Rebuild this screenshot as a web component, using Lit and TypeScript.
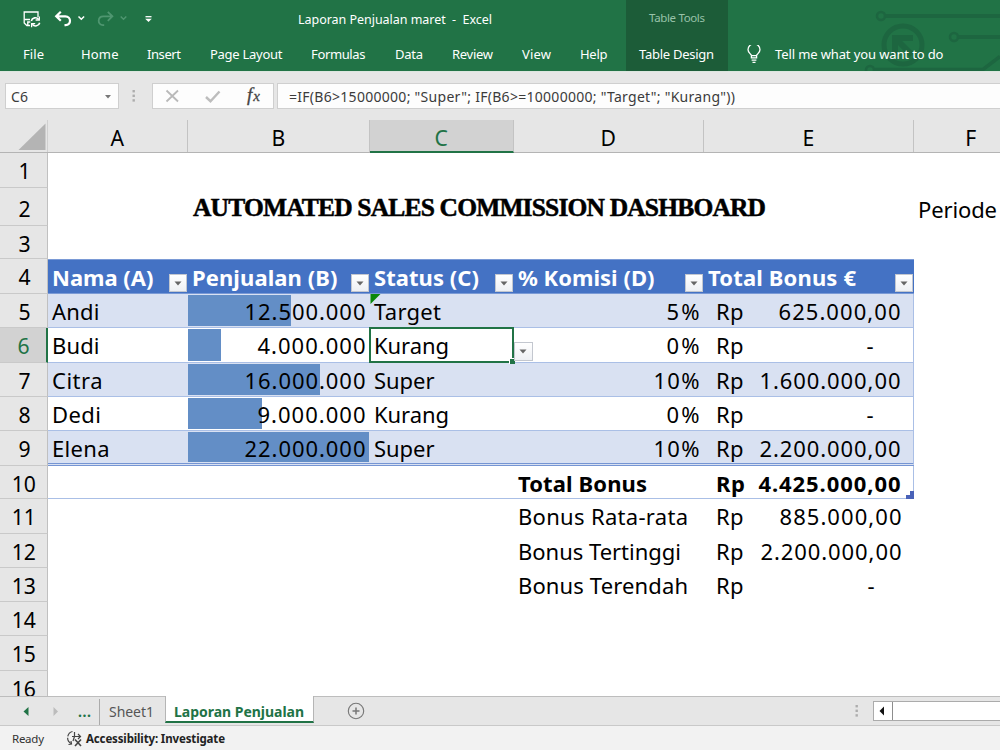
import { LitElement, html, css, nothing } from "lit";
import { customElement, property } from "lit/decorators.js";
import { classMap } from "lit/directives/class-map.js";
import { styleMap } from "lit/directives/style-map.js";

/** A run of text tracked so that it fills a given advance width. */
@customElement("fit-text")
class FitText extends LitElement {
  @property() text = "";
  @property({ type: Number }) w = 0;

  static styles = css`
    :host { display: inline-block; white-space: pre; }
    .run { display: inline-block; }
  `;

  updated() {
    const run = this.renderRoot.querySelector(".run") as HTMLElement;
    run.style.letterSpacing = "0px";
    const natural = run.getBoundingClientRect().width;
    const n = this.text.length;
    if (!this.w || n < 2) return;
    const ls = (this.w - natural) / (n - 1);
    run.style.letterSpacing = `${ls}px`;
    run.style.marginRight = `${-ls}px`;
  }

  render() {
    return html`<span class="run">${this.text}</span>`;
  }
}

const fit = (text: string, w: number) => html`<fit-text .text=${text} .w=${w}></fit-text>`;

interface Row {
  n: number;
  h: number;
  name?: [string, number];
  sales?: [string, number];
  bar?: number;
  status?: [string, number];
  label?: [string, number];
  pct?: [string, number];
  bonus?: [string, number];
}

const ROWS: Row[] = [
  { n: 1, h: 35 },
  { n: 2, h: 38 },
  { n: 3, h: 33 },
  { n: 4, h: 35 },
  { n: 5, h: 34, name: ["Andi", 47.5], sales: ["12.500.000", 121], bar: 103, status: ["Target", 67], pct: ["5%", 33], bonus: ["625.000,00", 122] },
  { n: 6, h: 35, name: ["Budi", 47.5], sales: ["4.000.000", 108], bar: 33, status: ["Kurang", 75], pct: ["0%", 33], bonus: ["-", 0] },
  { n: 7, h: 34, name: ["Citra", 50.5], sales: ["16.000.000", 121], bar: 132, status: ["Super", 60.5], pct: ["10%", 46], bonus: ["1.600.000,00", 141] },
  { n: 8, h: 34, name: ["Dedi", 49], sales: ["9.000.000", 108], bar: 74, status: ["Kurang", 75], pct: ["0%", 33], bonus: ["-", 0] },
  { n: 9, h: 35, name: ["Elena", 57.5], sales: ["22.000.000", 121], bar: 181, status: ["Super", 60.5], pct: ["10%", 46], bonus: ["2.200.000,00", 141] },
  { n: 10, h: 33, label: ["Total Bonus", 129], bonus: ["4.425.000,00", 142] },
  { n: 11, h: 35, label: ["Bonus Rata-rata", 170], bonus: ["885.000,00", 122] },
  { n: 12, h: 34, label: ["Bonus Tertinggi", 163], bonus: ["2.200.000,00", 141] },
  { n: 13, h: 34, label: ["Bonus Terendah", 170], bonus: ["-", 0] },
  { n: 14, h: 34 },
  { n: 15, h: 35 },
  { n: 16, h: 34 },
];

const HEADS: [string, number][] = [
  ["Nama (A)", 101.5],
  ["Penjualan (B)", 145.5],
  ["Status (C)", 105],
  ["% Komisi (D)", 136.5],
  ["Total Bonus €", 148],
];

const TABS: [string, number][] = [
  ["File", 21], ["Home", 37.5], ["Insert", 34], ["Page Layout", 72.5], ["Formulas", 54.5],
  ["Data", 28], ["Review", 41], ["View", 29], ["Help", 27.5],
];

@customElement("app-root")
class AppRoot extends LitElement {
  static styles = css`
    :host {
      display: flex; flex-direction: column; width: 1000px; height: 750px; overflow: hidden;
      background: #fff; color: #000;
      font-family: "Noto Sans", "Open Sans", sans-serif; font-size: 13px;
    }
    * { box-sizing: border-box; }
    svg { display: block; }

    .ribbon { height: 71px; flex: none; position: relative; background: #217346; color: #fff; display: flex; overflow: hidden; }
    .art { position: absolute; right: 0; top: 0; }
    .left { width: 626px; display: flex; flex-direction: column; }
    .quick { height: 38px; display: flex; }
    .doc { padding-left: 138px; line-height: 40px; font-size: 12.5px; }
    .tabs { display: grid; grid-template-columns: 58px 66px 63px 101px 84px 57px 70px 58px 46px; padding-left: 23px; line-height: 33px; }
    .context { width: 102px; background: #1c5c38; display: flex; flex-direction: column; position: relative; }
    .tools { height: 38px; line-height: 35px; padding-left: 23px; font-size: 11.5px; color: #98c2a9; }
    .design { line-height: 33px; padding-left: 13px; }
    .tell { padding: 38px 0 0 19px; display: flex; gap: 14px; line-height: 33px; position: relative; }
    .bulb { padding-top: 7px; }

    .formula { height: 49px; flex: none; background: #e6e6e6; border-top: 1px solid #dce6df; padding: 11px 0 0 5px; display: flex; }
    .box { height: 26px; background: #fdfdfd; border: 1px solid #cfcfcf; font-size: 14px; line-height: 25px; color: #3b3b3b; }
    .name { width: 114px; display: flex; justify-content: space-between; padding: 0 5px; }
    .grip { width: 33px; padding: 6px 0 0 13px; }
    .fx { width: 122px; }
    .expr { flex: 1; margin-left: 3px; border-right: 0; padding-left: 11px; }

    .sheet { flex: 1; overflow: hidden; min-height: 0; }
    .row { display: grid; grid-template-columns: 48px 140px 182px 144px 190px 210px 86px; grid-template-rows: 100%; }
    .cols { height: 33px; background: #e6e6e6; border-bottom: 1px solid #b4b4b4; }
    .col { text-align: center; font-size: 22.5px; line-height: 35px; border-right: 1px solid #c3c3c3; height: 32px; }
    .col.last { padding-left: 28px; border: 0; }
    .col.corner { border-right-color: #d0d0d0; padding: 0; }
    .col.on { background: #d2d2d2; color: #217346; height: 33px; border-bottom: 2px solid #217346; }
    .thin { display: inline-block; transform: scaleX(0.94); }

    .num { background: #e6e6e6; border-right: 1px solid #c0c0c0; border-bottom: 1px solid #c9c9c9; text-align: center; font-size: 22.5px; line-height: 35px; padding-left: 1px; }
    .num.on { background: #d2d2d2; color: #217346; border-right: 2px solid #217346; }
    .num.tall { line-height: 41px; }
    .cell { position: relative; padding: 0 4px; font-size: 22px; line-height: 35px; white-space: nowrap; }
    .table { border-bottom: 1px solid #aabfe6; }
    .band { background: #d9e1f2; }
    .edge { border-right: 1px solid #aabfe6; }
    .nine { border-bottom: 3px double #7595d3; }
    .right { text-align: right; padding-right: 4.5px; }
    .bold { font-weight: 700; line-height: 34px; }
    .head { background: #4472c4; color: #fff; font-weight: 700; border-top: 1px solid #7a9ad6; border-bottom: 1px solid #7a9ad6; line-height: 34px; }
    .money { display: flex; justify-content: space-between; padding: 0 12.5px 0 12px; }
    .dash { padding-right: 27px; }
    .value { position: relative; }
    .bar { position: absolute; left: 0; top: 1px; bottom: 1px; background: #638ec6; }
    .title { font: 700 25.5px/40px "Liberation Serif", serif; padding-left: 5px; -webkit-text-stroke: 0.5px #000; }
    .period { line-height: 42px; }
    .btn { position: absolute; right: 1.5px; bottom: 1px; width: 18px; height: 18px; background: linear-gradient(#fff, #eef0f4); border: 1px solid #c3c7cf; }
    .btn svg { margin: 6px 0 0 4px; }
    .pick { right: -19px; bottom: 1px; height: 19px; width: 19px; z-index: 2; }
    .flag { position: absolute; left: 0; top: 0; }
    .sel { position: absolute; left: -1px; right: 0; top: -1px; bottom: -1px; border: 2px solid #217346; z-index: 1; }
    .knob { position: absolute; right: -3px; bottom: -3px; width: 6px; height: 6px; background: #217346; border: 1px solid #fff; border-right: 0; border-bottom: 0; }
    .resize { position: absolute; right: -1px; bottom: -1px; }

    .bottom { height: 30px; flex: none; background: #e6e6e6; border-top: 1px solid #bdbdbd; border-bottom: 1px solid #c9c9c9; display: flex; }
    .nav { width: 100px; height: 26px; border-right: 1px solid #ababab; display: flex; margin-top: 2px; }
    .dots { color: #217346; font-weight: 700; line-height: 26px; font-size: 14px; }
    .tab1 { width: 65px; padding-left: 9px; line-height: 29px; font-size: 14px; color: #555; }
    .tab2 { width: 149px; height: 27px; padding-left: 8px; margin-top: -1px; background: #fff; color: #217346; font-weight: 700; font-size: 14px; line-height: 31px; border: 1px solid #b5b5b5; border-top: 0; border-bottom: 2px solid #217346; }
    .add { padding: 5px 0 0 33px; flex: 1; }
    .grip2 { padding: 7px 14px 0 0; }
    .scroll { width: 127px; height: 20px; margin-top: 4px; background: #fff; border: 1px solid #ababab; border-right: 0; display: flex; }
    .arrow { width: 19px; border-right: 1px solid #8d8d8d; padding: 4px 0 0 5px; }

    .status { height: 24px; flex: none; background: #f2f2f2; display: flex; font-size: 11.5px; line-height: 25px; color: #333; padding-left: 12px; }
    .ready { width: 54px; }
    .access { padding: 4px 3px 0 0; }
    .strong { font-weight: 700; color: #222; }
  `;

  private caret(color = "#666") {
    return html`<svg width="8" height="5" viewBox="0 0 8 5"><path d="M0.5 0.5h7L4 4.5z" fill=${color}/></svg>`;
  }

  private grip() {
    return html`<svg width="4" height="14" viewBox="0 0 4 14" fill="#adadad">
      <rect x="0.5" y="1" width="2.4" height="2.4"/><rect x="0.5" y="5.6" width="2.4" height="2.4"/><rect x="0.5" y="10.2" width="2.4" height="2.4"/></svg>`;
  }

  private quickIcons() {
    return html`<svg width="160" height="38" viewBox="0 0 160 38" fill="none" stroke="#fff">
      <path d="M30 25.5h-3.2L24.200 23V12H38v5" stroke-width="1.3"/>
      <path d="M24.500 19.500h5.500M27.800 25.500v-3.500h2.500" stroke-width="1.400"/>
      <path d="M31.300 21a4.200 4.200 0 0 1 7.400-1.600M39.700 22.700a4.200 4.200 0 0 1-7.400 1.600" stroke-width="1.600"/>
      <path d="M39.300 16.400v3.600h-3.700M31.600 27.200v-3.500h3.600" stroke-width="1.300"/>
      <path d="M60.800 11.800l-4.600 4.500 4.600 4.500M56.700 16.300h8.600c6.200 0 6.200 8.800.4 8.800h-1.200" stroke-width="2.200"/>
      <path d="M78.500 16.500l2.800 2.800 2.800-2.800" stroke-width="1.500"/>
      <g stroke="#4f9670"><path d="M107.800 11.800l4.600 4.500-4.600 4.500M112 16.300h-8.600c-6.200 0-6.200 8.800-.4 8.800h1.200" stroke-width="1.800"/>
      <path d="M120.700 16.500l2.800 2.800 2.800-2.800" stroke-width="1.400"/></g>
      <path d="M145.500 16.700h6" stroke-width="1.300"/><path d="M145.200 18.700h6.600l-3.300 3.400z" fill="#fff" stroke="none"/></svg>`;
  }

  private ribbon() {
    return html`<div class="ribbon">
      <svg class="art" width="140" height="71" viewBox="860 0 140 71" fill="none" stroke="#1d6640" stroke-width="4">
        <circle cx="881" cy="16" r="4" stroke-width="2.600"/><path d="M886 16h114"/>
        <circle cx="903" cy="45" r="19" stroke-width="5"/><path d="M895 56V38h18M896 39l16 16" stroke-width="6"/>
        <circle cx="954" cy="37" r="4" stroke-width="2.600"/><path d="M959 37h41"/>
        <circle cx="870" cy="70" r="4" stroke-width="2.600"/><path d="M875 69.500h108l17-13" stroke-width="3.500"/></svg>
      <div class="left">
        <div class="quick">${this.quickIcons()}<div class="doc">${fit("Laporan Penjualan maret  -  Excel", 194)}</div></div>
        <div class="tabs">${TABS.map(([t, w]) => html`<div>${fit(t, w)}</div>`)}</div>
      </div>
      <div class="context"><div class="tools">${fit("Table Tools", 56)}</div><div class="design">${fit("Table Design", 75)}</div></div>
      <div class="tell">
        <svg class="bulb" width="14" height="26" viewBox="0 7 14 19" fill="none" stroke="#fff" stroke-width="1.300">
          <path d="M4.400 19.800v-2.500C3.600 15.600 1 14.600 1 11.800a6 6 0 0 1 12 0c0 2.800-2.600 3.800-3.400 5.500v2.500zM4.400 17.600h5.200M4.600 22.200h4.800M5.500 24.400h3"/></svg>
        ${fit("Tell me what you want to do", 168.5)}
      </div>
    </div>`;
  }

  private formulaBar() {
    return html`<div class="formula">
      <div class="box name">${fit("C6", 17)}<svg width="10" height="24" viewBox="0 0 10 24"><path d="M2 11h6l-3 3.500z" fill="#777"/></svg></div>
      <div class="grip">${this.grip()}</div>
      <div class="box fx"><svg width="120" height="24" viewBox="0 0 120 24" fill="none">
        <path d="M13.500 6.500l11.500 11M25 6.500l-11.500 11" stroke="#b9b9b9" stroke-width="1.800"/>
        <path d="M53 13l4.500 4.200L66.500 7.500" stroke="#bdbdbd" stroke-width="2.400"/>
        <text x="94" y="17" fill="#444" stroke="#444" stroke-width="0.300" font-family="Liberation Serif" font-style="italic" font-size="19">f<tspan font-size="15" dx="1">x</tspan></text></svg></div>
      <div class="box expr">${fit('=IF(B6>15000000; "Super"; IF(B6>=10000000; "Target"; "Kurang"))', 446)}</div>
    </div>`;
  }

  private btn(pick = false) {
    return html`<div class=${classMap({ btn: true, pick })}>${this.caret()}</div>`;
  }

  private row(r: Row) {
    const num = html`<div class=${classMap({ num: true, on: r.n === 6, tall: r.n === 2 })}><span class="thin">${r.n}</span></div>`;
    const size = styleMap({ height: `${r.h}px` });
    if (r.n === 4) {
      return html`<div class="row" style=${size}>${num}${HEADS.map(
        ([t, w]) => html`<div class="cell head">${fit(t, w)}${this.btn()}</div>`)}</div>`;
    }
    if (r.n === 2) {
      return html`<div class="row" style=${size}>${num}<div class="cell"></div>
        <div class="cell title">${fit("AUTOMATED SALES COMMISSION DASHBOARD", 573)}</div>
        <div></div><div></div><div></div><div class="cell period">${fit("Periode", 79)}</div></div>`;
    }
    const table = r.n >= 5 && r.n <= 10;
    const k = (extra = {}) => classMap({
      cell: true, table, band: table && r.n % 2 === 1, nine: r.n === 9, bold: r.n === 10, ...extra,
    });
    return html`<div class="row" style=${size}>${num}
      <div class=${k()}>${r.name ? fit(...r.name) : nothing}</div>
      <div class=${k({ right: true })}>${r.bar ? html`<div class="bar" style=${styleMap({ width: `${r.bar}px` })}></div>` : nothing}
        ${r.sales ? html`<span class="value">${fit(...r.sales)}</span>` : nothing}</div>
      <div class=${k()}>${r.status ? fit(...r.status) : nothing}
        ${r.n === 5 ? html`<svg class="flag" width="11" height="10" viewBox="0 0 11 10"><path d="M0.500 0H10.500L0.500 10z" fill="#0a870a"/></svg>` : nothing}
        ${r.n === 6 ? html`<div class="sel"><div class="knob"></div></div>${this.btn(true)}` : nothing}</div>
      <div class=${k({ right: !!r.pct })}>${r.pct ? fit(...r.pct) : nothing}${r.label ? fit(...r.label) : nothing}</div>
      <div class=${k({ money: true, edge: table })}>${r.bonus
        ? html`${fit("Rp", r.n === 10 ? 29 : 27.5)}<span class=${classMap({ dash: r.bonus[0] === "-" })}>${fit(...r.bonus)}</span>` : nothing}
        ${r.n === 10 ? html`<svg class="resize" width="8" height="8" viewBox="0 0 8 8"><path d="M4 0h4v8H0V4h4z" fill="#4a62b8"/></svg>` : nothing}</div>
    </div>`;
  }

  render() {
    return html`${this.ribbon()}${this.formulaBar()}
      <div class="sheet">
        <div class="row cols">
          <div class="col corner"><svg width="47" height="32" viewBox="0 0 47 32"><path d="M45.500 3.500V30H18.500z" fill="#b4b4b4"/></svg></div>
          ${["A", "B", "C", "D", "E", "F"].map((c) => html`<div class=${classMap({ col: true, on: c === "C", last: c === "F" })}><span class="thin">${c}</span></div>`)}
        </div>
        ${ROWS.map((r) => this.row(r))}
      </div>
      <div class="bottom">
        <div class="nav"><svg width="78" height="26" viewBox="0 0 78 26"><path d="M28.500 8v9L23.500 12.500z" fill="#217346"/><path d="M53.500 8v9l4.500-4.500z" fill="#bcbcbc"/></svg><span class="dots">${fit("...", 13)}</span></div>
        <div class="tab1">${fit("Sheet1", 45)}</div>
        <div class="tab2">${fit("Laporan Penjualan", 130)}</div>
        <div class="add"><svg width="18" height="18" viewBox="0 0 18 18" fill="none" stroke="#777"><circle cx="9" cy="9" r="7.700" stroke-width="1.100"/><path d="M9 5.500v7M5.500 9h7" stroke-width="1.500"/></svg></div>
        <div class="grip2">${this.grip()}</div>
        <div class="scroll"><div class="arrow"><svg width="6" height="10" viewBox="0 0 6 10"><path d="M5 0.500v9L0.500 5z" fill="#111"/></svg></div></div>
      </div>
      <div class="status">
        <div class="ready">${fit("Ready", 32)}</div>
        <svg class="access" width="20" height="21" viewBox="0 0 17 17" fill="none" stroke="#444" stroke-width="1.200">
          <path d="M6.500 1.500A6.500 6.500 0 0 0 5 13.500" stroke-dasharray="7 1.500"/><path d="M2.500 14.500l3-.5-.5-3" />
          <path d="M8.500 2v4.500M6 6.500h8M12 4l2.500 2.500L12 9M8.500 6.500L7 11" /><path d="M9 9.500l6 6.500M15 9.500L9 16" stroke-width="1.600"/></svg>
        <div class="strong">${fit("Accessibility: Investigate", 139)}</div>
      </div>`;
  }
}
